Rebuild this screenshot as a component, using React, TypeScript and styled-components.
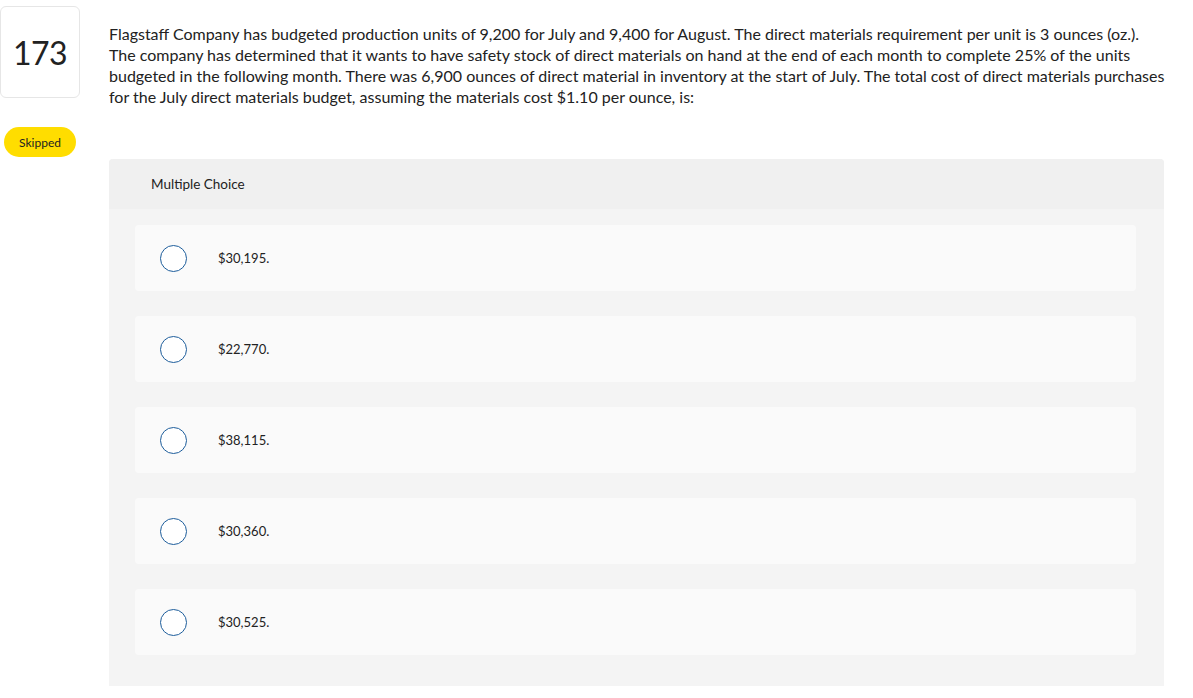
import styled, { createGlobalStyle } from "styled-components";

const GlobalStyle = createGlobalStyle`
  body {
    margin: 0;
    background: #fff;
    font-family: Lato, "Open Sans", Arial, sans-serif;
    color: #222;
  }
`;

const choices = ["$30,195.", "$22,770.", "$38,115.", "$30,360.", "$30,525."];

const questionLines = [
  "Flagstaff Company has budgeted production units of 9,200 for July and 9,400 for August. The direct materials requirement per unit is 3 ounces (oz.).",
  "The company has determined that it wants to have safety stock of direct materials on hand at the end of each month to complete 25% of the units",
  "budgeted in the following month. There was 6,900 ounces of direct material in inventory at the start of July. The total cost of direct materials purchases",
  "for the July direct materials budget, assuming the materials cost $1.10 per ounce, is:",
];

export default function App() {
  return (
    <>
      <GlobalStyle />
      <Page>
        <SideColumn>
          <NumberCard>173</NumberCard>
          <StatusPill>Skipped</StatusPill>
        </SideColumn>

        <MainColumn>
          <QuestionText>
            {questionLines.map((line) => (
              <Line key={line}>{line}</Line>
            ))}
          </QuestionText>

          <ChoicePanel>
            <PanelHeader>Multiple Choice</PanelHeader>
            <ChoiceList>
              {choices.map((choice) => (
                <ChoiceRow key={choice}>
                  <Radio />
                  <ChoiceLabel>{choice}</ChoiceLabel>
                </ChoiceRow>
              ))}
            </ChoiceList>
          </ChoicePanel>
        </MainColumn>
      </Page>
    </>
  );
}

const Page = styled.div`
  display: flex;
  align-items: flex-start;
  padding-top: 6px;
  width: 1193px;
`;

const SideColumn = styled.div`
  display: flex;
  flex: 0 0 80px;
  flex-direction: column;
  align-items: center;
`;

const NumberCard = styled.div`
  box-sizing: border-box;
  width: 80px;
  height: 92px;
  border: 1px solid #e6e6e6;
  border-radius: 6px;
  display: flex;
  align-items: center;
  justify-content: center;
  font-size: 32px;
  color: #222;
  letter-spacing: -0.5px;
`;

const StatusPill = styled.div`
  margin-top: 29px;
  width: 72px;
  height: 30px;
  border-radius: 15px;
  background: #ffdd00;
  display: flex;
  align-items: center;
  justify-content: center;
  font-size: 12px;
  color: #222;
`;

const MainColumn = styled.div`
  display: flex;
  flex: 0 0 1055px;
  flex-direction: column;
  margin-left: 29px;
  padding-top: 17px;
`;

const QuestionText = styled.div`
  font-size: 16px;
  line-height: 21px;
  color: #222;
`;

const Line = styled.div`
  white-space: nowrap;
`;

const ChoicePanel = styled.div`
  margin-top: 52px;
  background: #f4f4f4;
  border-radius: 4px 4px 0 0;
  overflow: hidden;
`;

const PanelHeader = styled.div`
  height: 50px;
  background: #f0f0f0;
  display: flex;
  align-items: center;
  padding-left: 42px;
  font-size: 13.5px;
  color: #222;
`;

const ChoiceList = styled.div`
  display: flex;
  flex-direction: column;
  row-gap: 25px;
  padding: 16px 28px 31px 26px;
`;

const ChoiceRow = styled.div`
  display: flex;
  align-items: center;
  height: 66px;
  background: #fafafa;
  border-radius: 4px;
  padding-left: 25px;
`;

const Radio = styled.span`
  box-sizing: border-box;
  width: 27px;
  height: 27px;
  border-radius: 50%;
  border: 1.5px solid #1d5d9b;
  background: #fff;
`;

const ChoiceLabel = styled.span`
  margin-left: 31px;
  font-size: 13px;
  color: #222;
`;
